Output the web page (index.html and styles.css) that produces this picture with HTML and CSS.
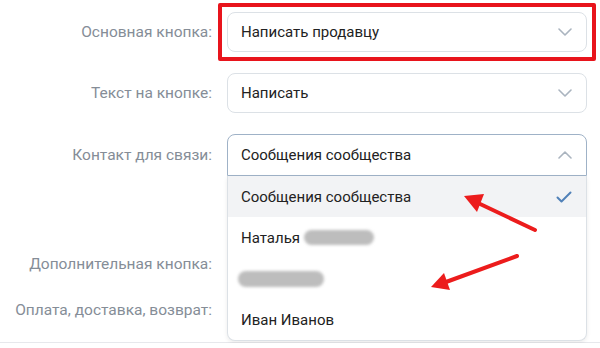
FILE: index.html
```html
<!DOCTYPE html>
<html>
<head>
    <title>Настройки кнопки</title>
    <link rel="stylesheet" href="styles.css">
</head>
<body>
    <div class="form">
        <div class="row">
            <div class="label">Основная кнопка:</div>
            <div class="field highlighted">
                <div class="select">
                    <span>Написать продавцу</span>
                    <svg class="chevron" width="14" height="8" viewBox="0 0 14 8"><path d="M1 1l6 6 6-6" /></svg>
                </div>
            </div>
        </div>
        <div class="row">
            <div class="label">Текст на кнопке:</div>
            <div class="field">
                <div class="select">
                    <span>Написать</span>
                    <svg class="chevron" width="14" height="8" viewBox="0 0 14 8"><path d="M1 1l6 6 6-6" /></svg>
                </div>
            </div>
        </div>
        <div class="row">
            <div class="label">Контакт для связи:</div>
            <div class="field">
                <div class="select open">
                    <span>Сообщения сообщества</span>
                    <svg class="chevron" width="14" height="8" viewBox="0 0 14 8"><path d="M1 7l6-6 6 6" /></svg>
                </div>
                <ul class="dropdown">
                    <li class="active">
                        <span>Сообщения сообщества</span>
                        <svg class="check" width="16" height="12" viewBox="0 0 16 12"><path d="M1.5 6.5l4 4 9-9" /></svg>
                    </li>
                    <li><span>Наталья</span><i class="blur blur-short"></i></li>
                    <li><i class="blur blur-long"></i></li>
                    <li><span>Иван Иванов</span></li>
                </ul>
            </div>
        </div>
        <div class="row row-extra">
            <div class="label">Дополнительная кнопка:</div>
            <div class="field"></div>
        </div>
        <div class="row row-small">
            <div class="label">Оплата, доставка, возврат:</div>
            <div class="field"></div>
        </div>
    </div>

    <!-- annotation arrows -->
    <svg class="arrows" width="600" height="348" viewBox="0 0 600 348">
        <path d="M535 230L478 203" />
        <polygon points="464,196 484,194 477,212" />
        <path d="M517 256L446 282" />
        <polygon points="431,287 444,273 450,290" />
    </svg>
</body>
</html>
```

FILE: styles.css
```css
body {
    margin: 0;
    background-color: #FFFFFF;
    font-family: Roboto, "Noto Sans", sans-serif;
    font-size: 15px;
    color: #000000;
    overflow: hidden;
}
.form {
    padding-top: 12px;
    border-bottom: 1px solid #e7e8ec;
    padding-bottom: 12px;
}
.row {
    display: grid;
    grid-template-columns: 212px 360px;
    column-gap: 15px;
    align-items: center;
    margin-bottom: 21px;
}
.label {
    text-align: right;
    color: #858d97;
    font-size: 15.5px;
    white-space: nowrap;
}
.field {
    position: relative;
    min-height: 40px;
}
.select {
    display: flex;
    align-items: center;
    justify-content: space-between;
    height: 40px;
    box-sizing: border-box;
    padding: 0 14px 0 13px;
    border: 1px solid #dce1e6;
    border-radius: 8px;
    background-color: #FFFFFF;
    color: #222222;
}
.select.open {
    height: 42px;
    border-color: #9fb2c7;
    border-radius: 8px 8px 0 0;
}
.chevron path {
    fill: none;
    stroke: #aab4bf;
    stroke-width: 1.6;
    stroke-linecap: round;
    stroke-linejoin: round;
}
.highlighted::after {
    content: "";
    position: absolute;
    top: -9px;
    left: -9px;
    right: -9px;
    bottom: -9px;
    border: 4px solid #e8141c;
    border-radius: 2px;
}
.dropdown {
    position: absolute;
    top: 42px;
    left: 0;
    right: 0;
    margin: 0;
    padding: 0;
    list-style: none;
    background-color: #FFFFFF;
    border: 1px solid #dce1e6;
    border-top: none;
    border-radius: 0 0 8px 8px;
    box-shadow: 0 2px 4px rgba(0, 0, 0, 0.08);
    z-index: 2;
}
.dropdown li {
    display: flex;
    align-items: center;
    height: 41px;
    padding: 0 14px 0 13px;
    color: #222222;
}
.dropdown li.active {
    justify-content: space-between;
    background-color: #f2f3f5;
}
.check path {
    fill: none;
    stroke: #5181b8;
    stroke-width: 2;
    stroke-linecap: round;
    stroke-linejoin: round;
}
.blur {
    display: inline-block;
    height: 15px;
    background-color: #bdbdbd;
    border-radius: 8px;
    filter: blur(1.5px);
}
.blur-short {
    width: 70px;
    margin-left: 4px;
}
.blur-long {
    width: 86px;
    height: 16px;
    margin-left: -3px;
}
.row-extra {
    margin-top: 68px;
    margin-bottom: 6px;
}
.row-small {
    margin-bottom: 0;
}
.arrows {
    position: absolute;
    top: 0;
    left: 0;
    z-index: 3;
    pointer-events: none;
}
.arrows path {
    stroke: #ec1c1c;
    stroke-width: 4;
    stroke-linecap: round;
}
.arrows polygon {
    fill: #ec1c1c;
}
```
